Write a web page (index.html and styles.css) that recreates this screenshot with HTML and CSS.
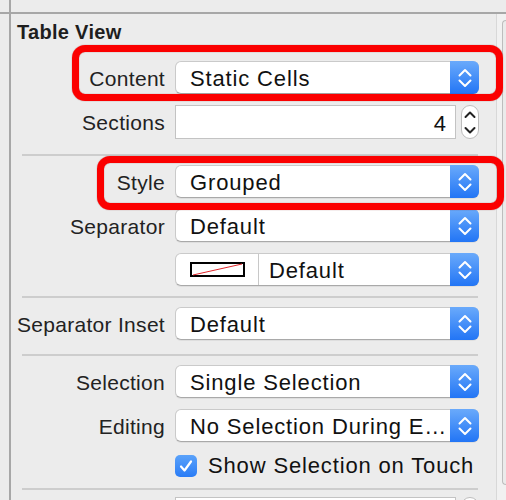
FILE: index.html
```html
<!DOCTYPE html>
<html>
<head>
<meta charset="utf-8">
<link rel="stylesheet" href="styles.css">
</head>
<body>
<div class="topbar"><div class="topgutter"></div></div>
<div class="frame">
  <div class="gutter"></div>
  <div class="inspector">
    <div class="title">Table View</div>

    <div class="group g1">
      <div class="row">
        <span class="label">Content</span>
        <div class="popup"><span class="value">Static Cells</span><span class="arrows"><svg width="14" height="20" viewBox="0 0 14 20"><polyline points="1.5,7.5 7,2 12.5,7.5"/><polyline points="1.5,12.5 7,18 12.5,12.5"/></svg></span></div>
        <div class="mark mark1"></div>
      </div>
      <div class="row">
        <span class="label">Sections</span>
        <div class="fieldwrap">
          <div class="field">4</div>
          <div class="stepper"><svg width="18" height="33" viewBox="0 0 18 33"><polyline points="4.5,11 9,6.5 13.5,11"/><polyline points="4.5,22 9,26.5 13.5,22"/></svg></div>
        </div>
      </div>
    </div>
    <div class="sep"></div>

    <div class="group g2">
      <div class="row">
        <span class="label">Style</span>
        <div class="popup"><span class="value">Grouped</span><span class="arrows"><svg width="14" height="20" viewBox="0 0 14 20"><polyline points="1.5,7.5 7,2 12.5,7.5"/><polyline points="1.5,12.5 7,18 12.5,12.5"/></svg></span></div>
        <div class="mark mark2"></div>
      </div>
      <div class="row">
        <span class="label">Separator</span>
        <div class="popup"><span class="value">Default</span><span class="arrows"><svg width="14" height="20" viewBox="0 0 14 20"><polyline points="1.5,7.5 7,2 12.5,7.5"/><polyline points="1.5,12.5 7,18 12.5,12.5"/></svg></span></div>
      </div>
      <div class="row">
        <span class="label"></span>
        <div class="popup colorpop">
          <span class="swatchcell"><svg class="swatch" width="55" height="15" viewBox="0 0 55 15"><rect x="1" y="1" width="53" height="13" fill="#fff" stroke="#000" stroke-width="2"/><line x1="3" y1="13" x2="52" y2="2" stroke="#e0262a" stroke-width="1"/></svg></span>
          <span class="value colorval">Default</span><span class="arrows"><svg width="14" height="20" viewBox="0 0 14 20"><polyline points="1.5,7.5 7,2 12.5,7.5"/><polyline points="1.5,12.5 7,18 12.5,12.5"/></svg></span>
        </div>
      </div>
    </div>
    <div class="sep"></div>

    <div class="group g3">
      <div class="row">
        <span class="label">Separator Inset</span>
        <div class="popup"><span class="value">Default</span><span class="arrows"><svg width="14" height="20" viewBox="0 0 14 20"><polyline points="1.5,7.5 7,2 12.5,7.5"/><polyline points="1.5,12.5 7,18 12.5,12.5"/></svg></span></div>
      </div>
    </div>
    <div class="sep"></div>

    <div class="group g4">
      <div class="row">
        <span class="label">Selection</span>
        <div class="popup"><span class="value">Single Selection</span><span class="arrows"><svg width="14" height="20" viewBox="0 0 14 20"><polyline points="1.5,7.5 7,2 12.5,7.5"/><polyline points="1.5,12.5 7,18 12.5,12.5"/></svg></span></div>
      </div>
      <div class="row">
        <span class="label">Editing</span>
        <div class="popup"><span class="value">No Selection During E…</span><span class="arrows"><svg width="14" height="20" viewBox="0 0 14 20"><polyline points="1.5,7.5 7,2 12.5,7.5"/><polyline points="1.5,12.5 7,18 12.5,12.5"/></svg></span></div>
      </div>
      <div class="row checkrow">
        <span class="label"></span>
        <div class="check">
          <span class="box"><svg width="22" height="22" viewBox="0 0 22 22"><polyline points="6,11.5 9.5,15.5 16,6.5"/></svg></span>
          <span class="value">Show Selection on Touch</span>
        </div>
      </div>
    </div>
    <div class="sep"></div>

    <div class="group g5">
      <div class="row">
        <span class="label"></span>
        <div class="fieldwrap">
          <div class="field"></div>
          <div class="stepper"></div>
        </div>
      </div>
    </div>
  </div>
  <div class="rail"><div class="scroller"></div></div>
</div>
</body>
</html>
```

FILE: styles.css
```css
html, body {
  margin: 0;
  padding: 0;
}
body {
  width: 506px;
  height: 500px;
  overflow: hidden;
  background: #ececec;
  font-family: "Liberation Sans", Arial, sans-serif;
  color: #1c1c1c;
}
.topbar {
  height: 12px;
  border-bottom: 2px solid #a7a7a7;
  display: flex;
}
.topgutter {
  width: 9px;
  border-right: 2px solid #a7a7a7;
}
.frame {
  display: flex;
  height: 486px;
  overflow: hidden;
}
.gutter {
  width: 9px;
  border-right: 2px solid #a7a7a7;
  flex: none;
}
.inspector {
  flex: 1;
  padding-top: 6px;
}
.title {
  font-weight: bold;
  font-size: 20px;
  line-height: 24px;
  letter-spacing: 0.3px;
  padding-left: 6px;
  color: #1e1e1e;
}
.group {
  display: flex;
  flex-direction: column;
  gap: 11px;
}
.g1 { padding-top: 17px; padding-bottom: 16px; }
.g2 { padding-top: 9px; padding-bottom: 10px; }
.g3 { padding-top: 9px; padding-bottom: 14px; }
.g4 { padding-top: 9px; padding-bottom: 11px; }
.g5 { padding-top: 7px; }
.sep {
  height: 2px;
  background: #cdcdcd;
  margin-left: 11px;
  width: 456px;
}
.row {
  position: relative;
  display: grid;
  grid-template-columns: 154px 304px;
  column-gap: 10px;
  align-items: center;
  height: 33px;
}
.label {
  text-align: right;
  font-size: 21px;
  letter-spacing: 0.3px;
  color: #222;
  white-space: nowrap;
  padding-top: 2px;
}
.value {
  font-size: 22px;
  letter-spacing: 0.85px;
  color: #111;
  white-space: nowrap;
}
.popup {
  height: 33px;
  box-sizing: border-box;
  display: flex;
  align-items: center;
  background: #fff;
  border: 1px solid #cacaca;
  border-bottom-color: #a9a9a9;
  border-radius: 6px;
  box-shadow: 0 1px 0 rgba(0,0,0,0.06);
}
.popup .value {
  flex: 1;
  padding-left: 14px;
  padding-top: 2px;
}
.arrows {
  width: 29px;
  height: 33px;
  margin: -1px -1px -1px 0;
  display: flex;
  align-items: center;
  justify-content: center;
  border-radius: 0 6px 6px 0;
  background: linear-gradient(#6aaafb, #2275f5);
}
.arrows svg polyline {
  fill: none;
  stroke: #fff;
  stroke-width: 2;
  stroke-linecap: round;
  stroke-linejoin: round;
}
.fieldwrap {
  display: flex;
  gap: 5px;
  height: 34px;
}
.field {
  flex: 1;
  box-sizing: border-box;
  background: #fff;
  border: 1px solid #c3c3c3;
  text-align: right;
  padding-right: 9px;
  padding-top: 2px;
  font-size: 22px;
  line-height: 32px;
  color: #111;
}
.stepper {
  width: 18px;
  box-sizing: border-box;
  background: #fff;
  border: 1px solid #bdbdbd;
  border-radius: 9px;
  display: flex;
  align-items: center;
  justify-content: center;
  overflow: hidden;
}
.stepper svg {
  flex: none;
}
.stepper polyline {
  fill: none;
  stroke: #222;
  stroke-width: 2;
  stroke-linecap: round;
  stroke-linejoin: round;
}
.colorpop .swatchcell {
  width: 82px;
  height: 31px;
  display: flex;
  align-items: center;
  justify-content: center;
  border-right: 1px solid #c8c8c8;
}
.colorpop .colorval {
  padding-left: 10px;
}
.checkrow {
  height: 24px;
}
.check {
  display: flex;
  align-items: center;
  gap: 11px;
}
.box {
  width: 22px;
  height: 22px;
  border-radius: 5px;
  background: linear-gradient(#5aa2fa, #2a7cf6);
  display: flex;
}
.box polyline {
  fill: none;
  stroke: #fff;
  stroke-width: 2.2;
  stroke-linecap: round;
  stroke-linejoin: round;
}
.mark {
  position: absolute;
  z-index: 2;
  border: 7px solid #fb0000;
  border-radius: 13px;
  box-shadow: 0 0 1px rgba(110,0,0,0.7), inset 0 0 1px rgba(110,0,0,0.7);
  pointer-events: none;
}
.mark1 {
  left: 61px;
  top: -16px;
  right: -7px;
  bottom: -7px;
}
.mark2 {
  left: 86px;
  top: -9px;
  right: -8px;
  bottom: -12px;
}
.rail {
  flex: none;
  width: 10px;
  border-left: 1px solid #d8d8d8;
  background: #f1f1f1;
  padding-top: 6px;
  padding-left: 5px;
  box-sizing: border-box;
}
.scroller {
  height: 463px;
  border: 1px solid #bdbdbd;
  border-right: none;
  border-radius: 6px 0 0 6px;
  background: #ebebeb;
}
```
